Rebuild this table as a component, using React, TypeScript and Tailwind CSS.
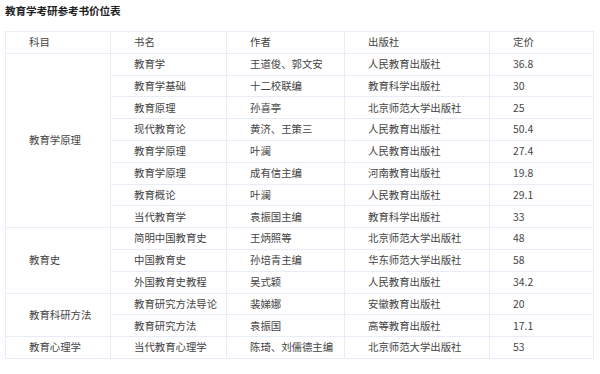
import React from 'react';

type Row = { subject?: string; span?: number; book: string; author: string; press: string; price: string };

const rows: Row[] = [
  { subject: '教育学原理', span: 8, book: '教育学', author: '王道俊、郭文安', press: '人民教育出版社', price: '36.8' },
  { book: '教育学基础', author: '十二校联编', press: '教育科学出版社', price: '30' },
  { book: '教育原理', author: '孙喜亭', press: '北京师范大学出版社', price: '25' },
  { book: '现代教育论', author: '黄济、王策三', press: '人民教育出版社', price: '50.4' },
  { book: '教育学原理', author: '叶澜', press: '人民教育出版社', price: '27.4' },
  { book: '教育学原理', author: '成有信主编', press: '河南教育出版社', price: '19.8' },
  { book: '教育概论', author: '叶澜', press: '人民教育出版社', price: '29.1' },
  { book: '当代教育学', author: '袁振国主编', press: '教育科学出版社', price: '33' },
  { subject: '教育史', span: 3, book: '简明中国教育史', author: '王炳照等', press: '北京师范大学出版社', price: '48' },
  { book: '中国教育史', author: '孙培青主编', press: '华东师范大学出版社', price: '58' },
  { book: '外国教育史教程', author: '吴式颖', press: '人民教育出版社', price: '34.2' },
  { subject: '教育科研方法', span: 2, book: '教育研究方法导论', author: '裴娣娜', press: '安徽教育出版社', price: '20' },
  { book: '教育研究方法', author: '袁振国', press: '高等教育出版社', price: '17.1' },
  { subject: '教育心理学', span: 1, book: '当代教育心理学', author: '陈琦、刘儒德主编', press: '北京师范大学出版社', price: '53' },
];

const cell = 'border border-[#e6edf6] pl-[23px] h-[21.8px] p-0 text-left align-middle font-normal leading-none';

export default function App() {
  return (
    <div className="w-[600px] h-[374px] bg-white px-[5px] pt-[4px] text-[#444] font-['Microsoft_YaHei','Noto_Sans_CJK_SC',sans-serif]">
      <h1 className="text-[10.7px] leading-[13px] font-bold text-[#222] tracking-[-0.2px]">教育学考研参考书价位表</h1>
      <table className="mt-[14px] w-[588px] border-collapse table-fixed text-[10.4px]">
        <colgroup>
          <col className="w-[105px]" />
          <col className="w-[116px]" />
          <col className="w-[118px]" />
          <col className="w-[145px]" />
          <col className="w-[104px]" />
        </colgroup>
        <thead>
          <tr>
            <th className={cell}>科目</th>
            <th className={cell}>书名</th>
            <th className={cell}>作者</th>
            <th className={cell}>出版社</th>
            <th className={cell}>定价</th>
          </tr>
        </thead>
        <tbody>
          {rows.map((r, i) => (
            <tr key={i}>
              {r.subject && (
                <td rowSpan={r.span} className={cell}>{r.subject}</td>
              )}
              <td className={cell}>{r.book}</td>
              <td className={cell}>{r.author}</td>
              <td className={cell}>{r.press}</td>
              <td className={cell}>{r.price}</td>
            </tr>
          ))}
        </tbody>
      </table>
    </div>
  );
}
